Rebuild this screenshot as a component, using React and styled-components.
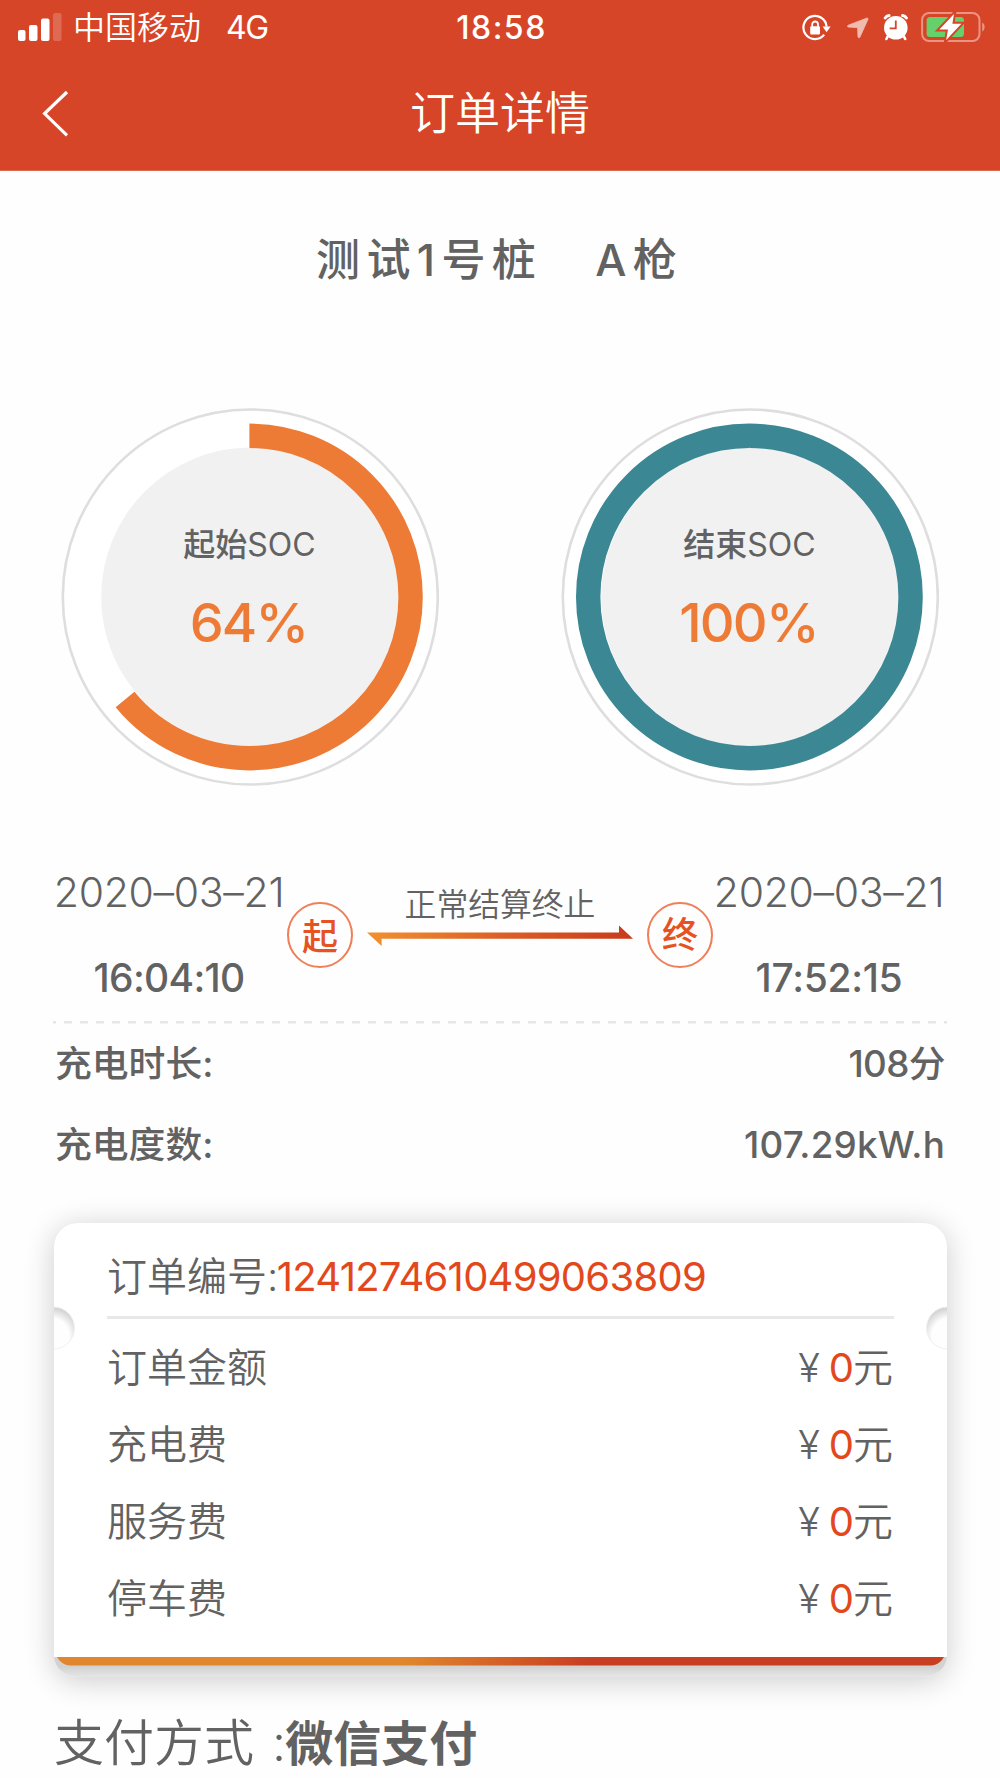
import React from "react";
import styled, { createGlobalStyle } from "styled-components";

const GlobalStyle = createGlobalStyle`
  * {
    box-sizing: border-box;
  }
  body {
    margin: 0;
    background-color: #fefefe;
    color: #626262;
    font-family: Inter, "Noto Sans CJK SC", sans-serif;
  }
`;

const Container = styled.div`
  width: 1000px;
  height: 1778px;
  overflow: hidden;
  background-color: #fefefe;
`;

const Header = styled.header`
  height: 171px;
  background-color: #d74528;
  border-bottom: 1px solid #dc6a50;
  color: white;
`;

const StatusBar = styled.div`
  height: 54px;
  padding: 0 15px 0 18px;
  display: grid;
  grid-template-columns: 1fr auto 1fr;
  align-items: center;
  font-size: 32px;
  line-height: 54px;
`;

const StatusLeft = styled.div`
  display: flex;
  align-items: center;
`;

const Carrier = styled.span`
  margin-left: 10px;
  padding-top: 1px;
  font-weight: 350;
`;

const Network = styled.span`
  margin-left: 25px;
  padding-top: 1px;
  font-weight: 400;
  letter-spacing: -1.4px;
`;

const Clock = styled.span`
  padding-top: 1px;
  font-weight: 500;
  letter-spacing: 1.5px;
`;

const StatusRight = styled.div`
  display: flex;
  align-items: center;
  justify-content: flex-end;
`;

const StatusIcon = styled.svg`
  display: block;
  margin-left: ${(props) => props.$gap || 0}px;
`;

const NavBar = styled.div`
  height: 116px;
  padding: 1px 42px 0 41px;
  display: grid;
  grid-template-columns: 1fr auto 1fr;
  align-items: center;
`;

const BackIcon = styled.svg`
  display: block;
`;

const NavTitle = styled.h1`
  margin: 0;
  padding: 2px 0 0 1px;
  font-size: 45px;
  line-height: 113px;
  font-weight: 350;
`;

const PileName = styled.h2`
  margin: 0;
  padding: 2px 0 0 316px;
  height: 173px;
  font-size: 44px;
  line-height: 174px;
  font-weight: 500;
  letter-spacing: 6.4px;
  white-space: pre;
`;

const GunName = styled.span`
  margin-left: 53px;
`;

const Gauges = styled.div`
  padding: 61px 61px 0;
  display: flex;
  justify-content: space-between;
`;

const Gauge = styled.div`
  display: grid;
  width: 378px;
  height: 382px;
`;

const GaugeRing = styled.svg`
  grid-area: 1 / 1;
`;

const GaugeText = styled.div`
  grid-area: 1 / 1;
  padding: 114px 1px 0 0;
  text-align: center;
`;

const GaugeLabel = styled.div`
  font-size: 32px;
  line-height: 52px;
  font-weight: 400;
`;

const GaugeLabelCjk = styled.span`
  font-weight: 500;
`;

const GaugeValue = styled.div`
  margin-top: 17px;
  padding-right: 2px;
  color: #ee7b35;
  font-size: 54px;
  line-height: 70px;
  font-weight: 500;
  letter-spacing: -1.8px;
`;

const Period = styled.section`
  margin: 65px 53px 0;
  height: 169px;
  display: flex;
`;

const Moment = styled.div`
  padding-top: 10px;
  padding-right: 2px;
  width: 234px;
  flex: none;
  text-align: center;
`;

const Day = styled.div`
  font-size: 41px;
  line-height: 60px;
  font-weight: 300;
  letter-spacing: -0.3px;
  white-space: nowrap;
`;

const Time = styled.div`
  margin-top: 26px;
  font-size: 39px;
  line-height: 60px;
  font-weight: 500;
  letter-spacing: ${(props) => props.$spacing || "-0.7px"};
`;

const Seal = styled.div`
  margin-top: 50px;
  width: 66px;
  height: 66px;
  flex: none;
  border: 2px solid #ef7f57;
  border-radius: 50%;
  text-align: center;
  color: #e65222;
  font-size: 36px;
  line-height: ${(props) => props.$line || "66px"};
  font-weight: 500;
`;

const Route = styled.div`
  margin: 26px 14px 0;
  width: 266px;
  flex: none;
  text-align: center;
  font-size: 31.8px;
  line-height: 54px;
  font-weight: 350;
`;

const RouteArrow = styled.svg`
  display: block;
  margin-top: -7px;
`;

const Divider = styled.svg`
  display: block;
  margin: 0 53px;
`;

const SummaryRow = styled.div`
  height: 81px;
  padding: 0 55px 0 55px;
  display: flex;
  justify-content: space-between;
  font-size: 36.8px;
  line-height: 79px;
  font-weight: 500;
`;

const SummaryValue = styled.span`
  letter-spacing: ${(props) => props.$spacing || "-0.6px"};
`;

const Card = styled.section`
  position: relative;
  margin: 37px 53px 0 54px;
  height: 454px;
  padding: 14px 53px 0;
  border-radius: 24px 24px 24px 24px / 24px 24px 21px 21px;
  background-color: white;
  box-shadow: 0 4px 30px rgba(0, 0, 0, 0.2);
  overflow: hidden;
`;

const Notch = styled.svg`
  position: absolute;
  top: 82px;
  ${(props) => (props.$side === "left" ? "left: 0;" : "right: 0;")}
  ${(props) => props.$side === "right" && "transform: scaleX(-1);"}
`;

const CardFoot = styled.svg`
  position: absolute;
  left: 0;
  bottom: 0;
`;

const OrderNo = styled.div`
  height: 82px;
  border-bottom: 3px solid #e8e8e8;
  font-size: 40px;
  line-height: 80px;
  font-weight: 350;
  white-space: nowrap;
`;

const OrderNumber = styled.span`
  margin-left: -1.5px;
  color: #e2481b;
  font-weight: 400;
  letter-spacing: -0.74px;
`;

const FeeList = styled.div`
  padding-top: 10px;
`;

const FeeRow = styled.div`
  height: 77px;
  padding-right: 1px;
  display: flex;
  justify-content: space-between;
  font-size: 40px;
  line-height: 77px;
  font-weight: 350;
`;

const Amount = styled.span`
  margin-left: 9px;
  margin-right: -1px;
  color: #e2481b;
  font-weight: 400;
`;

const Payment = styled.div`
  padding-left: 54px;
  height: 101px;
  margin-top: 16px;
  font-size: 50px;
  line-height: 101px;
  font-weight: 350;
  white-space: nowrap;
`;

const PaymentMethod = styled.b`
  font-size: 48px;
  font-weight: 700;
`;

const Colon = styled.span`
  margin-left: 18px;
  letter-spacing: -1px;
`;

const Signal = () => (
  <StatusIcon width="45" height="30" viewBox="0 1 45 30" fill="white">
    <rect x="0" y="18" width="7.5" height="11" rx="2" />
    <rect x="11" y="13" width="8.5" height="16" rx="2" />
    <rect x="23" y="6.5" width="8.5" height="22.5" rx="2" />
    <rect x="35" y="1" width="8.5" height="28" rx="2" opacity="0.2" />
  </StatusIcon>
);

const RotationLock = () => (
  <StatusIcon width="30" height="28" viewBox="0 0 30 28">
    <path
      d="M24.6 12.6A11.6 11.6 0 1 0 22.2 20.6"
      fill="none"
      stroke="white"
      strokeWidth="2.2"
    />
    <path d="M20.6 12.4H28.6L24.6 18.2Z" fill="white" />
    <rect x="8.2" y="12.2" width="9.8" height="8.2" rx="1" fill="white" />
    <path
      d="M10.2 13V10.4A2.9 2.9 0 0 1 16 10.4V13"
      fill="none"
      stroke="white"
      strokeWidth="1.8"
    />
  </StatusIcon>
);

const Location = () => (
  <StatusIcon $gap={15} width="22" height="22" viewBox="0 0 22 22">
    <path
      d="M19.5 1.2 1.3 8.2C.1 8.7.3 10 1.6 10.1L10.6 10.6 11 19.6C11.1 21 12.4 21.3 13 20L20.9 2.4C21.3 1.3 20.5.8 19.5 1.2Z"
      fill="#f1bcb0"
      stroke="#f1bcb0"
      strokeWidth="0.8"
    />
  </StatusIcon>
);

const Alarm = () => (
  <StatusIcon $gap={14} width="26" height="28" viewBox="0 1 26 28">
    <circle cx="12.8" cy="14.8" r="11.8" fill="white" />
    <path
      d="M2.2 5A5 5 0 0 1 6 2.6M19.6 2.6A5 5 0 0 1 23.4 5"
      fill="none"
      stroke="white"
      strokeWidth="3"
      strokeLinecap="round"
    />
    <path
      d="M4.6 23.6 3.4 26M21 23.6 22.2 26"
      stroke="white"
      strokeWidth="2.6"
      strokeLinecap="round"
    />
    <path
      d="M12.8 7.6V15.4H6.6"
      fill="none"
      stroke="#d74528"
      strokeWidth="1.8"
    />
  </StatusIcon>
);

const Battery = () => (
  <StatusIcon $gap={12} width="64" height="32" viewBox="0 1 64 32">
    <rect
      x="1.1"
      y="2"
      width="57.4"
      height="28"
      rx="7"
      fill="none"
      stroke="#ea9483"
      strokeWidth="2"
    />
    <path d="M61.2 11.5V20.5C64.4 19 64.4 13 61.2 11.5Z" fill="#ea9483" />
    <rect x="5.6" y="6" width="37.4" height="20" rx="3.5" fill="#66d16a" />
    <path
      d="M33 3 18.4 18.4H27L25.2 29 40.4 12.8H31.4Z"
      fill="white"
      stroke="#d74528"
      strokeWidth="4"
      paintOrder="stroke"
    />
  </StatusIcon>
);

const SocGauge = ({ name, percent, color }) => {
  const radius = 161.2;
  const length = 2 * Math.PI * radius;
  return (
    <Gauge>
      <GaugeRing width="378" height="382" viewBox="0 0 378 382">
        <circle
          cx="189.3"
          cy="192"
          r="187.5"
          fill="white"
          stroke="#dedede"
          strokeWidth="2.6"
        />
        <circle cx="189.7" cy="192" r="149.5" fill="#f1f1f1" />
        <circle
          cx="188.4"
          cy="192"
          r={radius}
          fill="none"
          stroke={color}
          strokeWidth="24.4"
          strokeDasharray={`${(length * percent) / 100} ${length}`}
          transform="rotate(-90 188.4 192)"
        />
      </GaugeRing>
      <GaugeText>
        <GaugeLabel>
          <GaugeLabelCjk>{name}</GaugeLabelCjk>SOC
        </GaugeLabel>
        <GaugeValue>{percent}%</GaugeValue>
      </GaugeText>
    </Gauge>
  );
};

const CardNotch = ({ side }) => (
  <Notch $side={side} width="22" height="46" viewBox="0 0 22 46">
    <defs>
      <radialGradient
        id={`notch-${side}`}
        gradientUnits="userSpaceOnUse"
        cx="-3"
        cy="31"
        r="30"
      >
        <stop offset="0.6" stopColor="#fefefe" />
        <stop offset="1" stopColor="#cbcbcb" />
      </radialGradient>
    </defs>
    <circle
      cx="-0.5"
      cy="23"
      r="21"
      fill={`url(#notch-${side})`}
      stroke="#f0f0f0"
      strokeWidth="1"
    />
  </Notch>
);

const fees = ["订单金额", "充电费", "服务费", "停车费"];

const App = () => {
  return (
    <Container>
      <GlobalStyle />
      <Header>
        <StatusBar>
          <StatusLeft>
            <Signal />
            <Carrier>中国移动</Carrier>
            <Network>4G</Network>
          </StatusLeft>
          <Clock>18:58</Clock>
          <StatusRight>
            <RotationLock />
            <Location />
            <Alarm />
            <Battery />
          </StatusRight>
        </StatusBar>
        <NavBar>
          <BackIcon width="30" height="48" viewBox="0 0 30 48">
            <path
              d="M26 3 3.6 24.6 26 46.4"
              fill="none"
              stroke="white"
              strokeWidth="3.2"
            />
          </BackIcon>
          <NavTitle>订单详情</NavTitle>
        </NavBar>
      </Header>
      <PileName>
        测试1号桩<GunName>A枪</GunName>
      </PileName>
      <Gauges>
        <SocGauge name="起始" percent={64} color="#ee7b35" />
        <SocGauge name="结束" percent={100} color="#3b8793" />
      </Gauges>
      <Period>
        <Moment>
          <Day>2020–03–21</Day>
          <Time>16:04:10</Time>
        </Moment>
        <Seal>起</Seal>
        <Route>
          正常结算终止
          <RouteArrow width="266" height="22" viewBox="0 0 266 22">
            <defs>
              <linearGradient id="route">
                <stop offset="0" stopColor="#f19130" />
                <stop offset="0.5" stopColor="#dc6026" />
                <stop offset="1" stopColor="#c83a1c" />
              </linearGradient>
            </defs>
            <path
              d="M0 7.4H252V.4L266 13.8H14.6V21Z"
              fill="url(#route)"
            />
          </RouteArrow>
        </Route>
        <Seal $line="62px">终</Seal>
        <Moment>
          <Day>2020–03–21</Day>
          <Time $spacing="-0.3px">17:52:15</Time>
        </Moment>
      </Period>
      <Divider width="894" height="3" viewBox="0 0 894 3">
        <path
          d="M0 1.2H894"
          stroke="#e6e6e6"
          strokeWidth="2.4"
          strokeDasharray="8 8"
          strokeDashoffset="5"
        />
      </Divider>
      <SummaryRow>
        <span>充电时长:</span>
        <SummaryValue>108分</SummaryValue>
      </SummaryRow>
      <SummaryRow>
        <span>充电度数:</span>
        <SummaryValue $spacing="0.2px">107.29kW.h</SummaryValue>
      </SummaryRow>
      <Card>
        <OrderNo>
          订单编号:<OrderNumber>1241274610499063809</OrderNumber>
        </OrderNo>
        <FeeList>
          {fees.map((fee) => (
            <FeeRow key={fee}>
              <span>{fee}</span>
              <span>
                ¥<Amount>0</Amount>元
              </span>
            </FeeRow>
          ))}
        </FeeList>
        <CardNotch side="left" />
        <CardNotch side="right" />
        <CardFoot width="893" height="21" viewBox="0 0 893 21">
          <defs>
            <linearGradient id="foot">
              <stop offset="0.39" stopColor="#e0872d" />
              <stop offset="0.6" stopColor="#c83e20" />
            </linearGradient>
            <linearGradient id="lip" x1="0" y1="0" x2="0" y2="1">
              <stop offset="0.5" stopColor="#d2d2d2" />
              <stop offset="1" stopColor="#e6e6e6" />
            </linearGradient>
          </defs>
          <path d="M0 1H893V21H0Z" fill="url(#lip)" />
          <path
            d="M3 1H890C887 6 883 9.4 877 9.4H16C10 9.4 6 6 3 1Z"
            fill="url(#foot)"
          />
        </CardFoot>
      </Card>
      <Payment>
        支付方式<Colon>:</Colon>
        <PaymentMethod>微信支付</PaymentMethod>
      </Payment>
    </Container>
  );
};

export default App;
